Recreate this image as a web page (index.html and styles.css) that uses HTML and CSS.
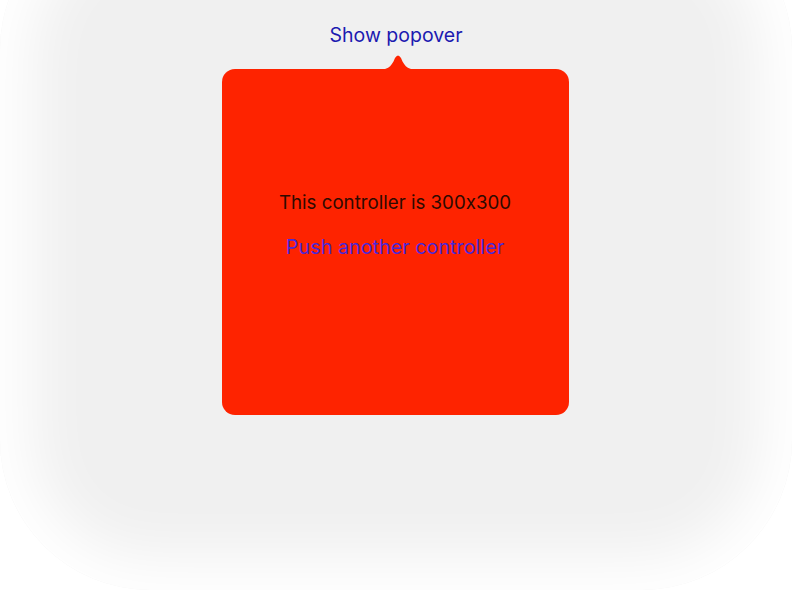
FILE: index.html
```html
<!DOCTYPE html>
<html>
<head>
<meta charset="utf-8">
<link rel="stylesheet" href="styles.css">
</head>
<body>
<div class="stage">
  <div class="trigger">Show popover</div>
  <div class="popover-wrap">
    <svg class="arrow" width="44" height="16" viewBox="0 0 44 16"><path d="M0 16 C 11 16 15 14 19 4 Q 22 -1 25 4 C 29 14 33 16 44 16 Z" fill="#fe2300"/></svg>
    <div class="popover">
      <div class="label">This controller is 300x300</div>
      <div class="link">Push another controller</div>
    </div>
  </div>
</div>
</body>
</html>
```
FILE: styles.css
```css
html, body {
  margin: 0;
  padding: 0;
  background: #ffffff;
}
body {
  width: 792px;
  height: 590px;
  overflow: hidden;
  font-family: Inter, "Noto Sans", sans-serif;
  font-feature-settings: "calt" 0;
}
.stage {
  box-sizing: border-box;
  width: 792px;
  height: 690px;
  margin-top: -100px;
  padding-top: 120px;
  background: #f0f0f0;
  border-radius: 150px;
  box-shadow: inset 0 0 60px 32px #ffffff;
  display: flex;
  flex-direction: column;
  align-items: center;
}
.trigger {
  color: #1c1ab0;
  font-size: 19.5px;
  line-height: 30px;
  height: 30px;
}
.popover-wrap {
  margin-top: 4px;
  display: flex;
  flex-direction: column;
  align-items: center;
}
.arrow {
  display: block;
  margin-bottom: -1px;
  margin-left: 3px;
}
.popover {
  width: 347px;
  height: 346px;
  background: #fe2300;
  border-radius: 13px;
  box-sizing: border-box;
  padding-top: 121px;
  display: flex;
  flex-direction: column;
  align-items: center;
  margin-left: -2px;
}
.label {
  color: #2e0a00;
  font-size: 18.7px;
  line-height: 26px;
  font-feature-settings: "calt" 0;
}
.link {
  color: #4a28d8;
  font-size: 19.8px;
  line-height: 26px;
  margin-top: 18px;
}
```
